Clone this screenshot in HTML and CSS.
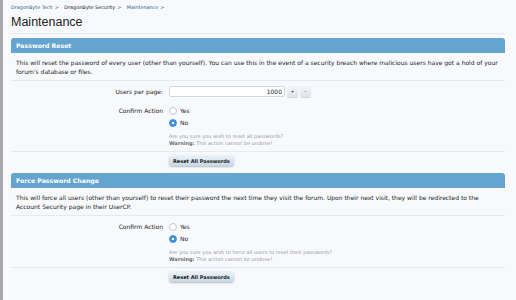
FILE: index.html
```html
<!DOCTYPE html>
<html lang="en">
<head>
    <meta charset="UTF-8">
    <title>Maintenance</title>
    <link rel="stylesheet" href="styles.css">
</head>
<body>
    <div class="page">
        <div class="crumbs">
            <a href="#" class="crumb link">DragonByte Tech</a><span class="arrow">&gt;</span>
            <a href="#" class="crumb">DragonByte Security</a><span class="arrow">&gt;</span>
            <a href="#" class="crumb link">Maintenance</a><span class="arrow">&gt;</span>
        </div>
        <h1 class="title">Maintenance</h1>

        <!-- Password Reset -->
        <form class="block">
            <h2 class="block-head">Password Reset</h2>
            <p class="explain">This will reset the password of every user (other than yourself). You can use this in the event of a security breach where malicious users have got a hold of your forum's database or files.</p>
            <div class="row">
                <label class="label">Users per page:</label>
                <div class="ctrl">
                    <div class="spin">
                        <input type="text" class="num" value="1000">
                        <button type="button" class="spin-btn">+</button>
                        <button type="button" class="spin-btn">-</button>
                    </div>
                </div>
            </div>
            <div class="row">
                <label class="label">Confirm Action</label>
                <div class="ctrl">
                    <div class="radio"><span class="dot"></span>Yes</div>
                    <div class="radio"><span class="dot on"></span>No</div>
                    <p class="hint">Are you sure you wish to reset all passwords?<br><b>Warning:</b> This action cannot be undone!</p>
                </div>
            </div>
            <div class="submit">
                <button type="button" class="btn">Reset All Passwords</button>
            </div>
        </form>

        <!-- Force Password Change -->
        <form class="block">
            <h2 class="block-head">Force Password Change</h2>
            <p class="explain">This will force all users (other than yourself) to reset their password the next time they visit the forum. Upon their next visit, they will be redirected to the Account Security page in their UserCP.</p>
            <div class="row">
                <label class="label">Confirm Action</label>
                <div class="ctrl">
                    <div class="radio"><span class="dot"></span>Yes</div>
                    <div class="radio"><span class="dot on"></span>No</div>
                    <p class="hint">Are you sure you wish to force all users to reset their passwords?<br><b>Warning:</b> This action cannot be undone!</p>
                </div>
            </div>
            <div class="submit">
                <button type="button" class="btn">Reset All Passwords</button>
            </div>
        </form>
    </div>
</body>
</html>
```

FILE: styles.css
```css
body {
    margin: 0;
    background: #f8f9fc;
    font-family: 'DejaVu Sans', Verdana, sans-serif;
    color: #222;
    border-left: 3px solid #a9a9a9;
    min-height: 300px;
    box-sizing: border-box;
}
.page {
    padding: 3px 11px 0 8px;
}
.crumbs {
    font-size: 4.9px;
    line-height: 8px;
    height: 8px;
}
.crumb {
    color: #222;
    text-decoration: none;
}
.crumb.link {
    color: #2d5f8f;
}
.arrow {
    margin: 0 4px 0 2px;
    color: #555;
}
.title {
    font-family: 'Liberation Sans', Arial, sans-serif;
    font-weight: normal;
    font-size: 12.5px;
    line-height: 18px;
    margin: 2px 0 0;
    padding-bottom: 2px;
    border-bottom: 1px solid #e6e9ef;
}
.block {
    margin-top: 4px;
}
.block-head {
    margin: 0;
    height: 15px;
    line-height: 15px;
    padding: 0 5px;
    background: #64a4d0;
    border-radius: 3px 3px 0 0;
    color: #fff;
    font-size: 6.2px;
    font-weight: bold;
}
.explain {
    margin: 0;
    padding: 5px 5px 4px;
    font-size: 6px;
    line-height: 9px;
    border-bottom: 1px solid #e6e9ef;
}
.row {
    display: grid;
    grid-template-columns: 152px 1fr;
    gap: 6px;
    padding-top: 5px;
}
.row + .row {
    padding-top: 8px;
}
.label {
    text-align: right;
    font-size: 6px;
    line-height: 11px;
}
.row + .row .label {
    line-height: 12px;
}
.spin {
    display: flex;
    align-items: center;
    gap: 2px;
}
.num {
    width: 116px;
    height: 11px;
    box-sizing: border-box;
    border: 1px solid #d3d6dc;
    border-radius: 2px;
    background: #fff;
    text-align: right;
    font-family: 'DejaVu Sans', Verdana, sans-serif;
    font-size: 6px;
    padding: 0 2px;
    color: #222;
}
.spin-btn {
    width: 11px;
    height: 11px;
    padding: 0;
    border: none;
    border-radius: 2px;
    background: linear-gradient(#f4f6f9, #dfe3e8);
    box-shadow: 0 1px 1px rgba(0, 0, 0, 0.15);
    font-size: 6px;
    line-height: 11px;
    color: #333;
}
.radio {
    display: flex;
    align-items: center;
    gap: 3px;
    font-size: 6px;
    line-height: 12px;
}
.dot {
    width: 6px;
    height: 6px;
    border-radius: 50%;
    border: 0.5px solid #c4c8ce;
    background: #fff;
}
.dot.on {
    background: radial-gradient(circle, #fff 0 1.3px, #3b8fdb 1.6px);
    border-color: #3b8fdb;
}
.hint {
    margin: 4px 0 0;
    font-size: 5px;
    line-height: 6.5px;
    color: #9a9a9a;
    padding-bottom: 5px;
}
.hint b {
    color: #6c6c6c;
    font-weight: 600;
}
.submit {
    display: flex;
    border-top: 1px solid #e6e9ef;
    padding: 3px 0 3px 158px;
}
.btn {
    height: 11px;
    padding: 0 4px;
    border: none;
    border-radius: 3px;
    background: linear-gradient(#eef3f8, #c8d6e5);
    box-shadow: 0 1px 2px rgba(0, 0, 0, 0.25);
    font-family: 'DejaVu Sans', Verdana, sans-serif;
    font-size: 5px;
    font-weight: bold;
    color: #222;
}
```
